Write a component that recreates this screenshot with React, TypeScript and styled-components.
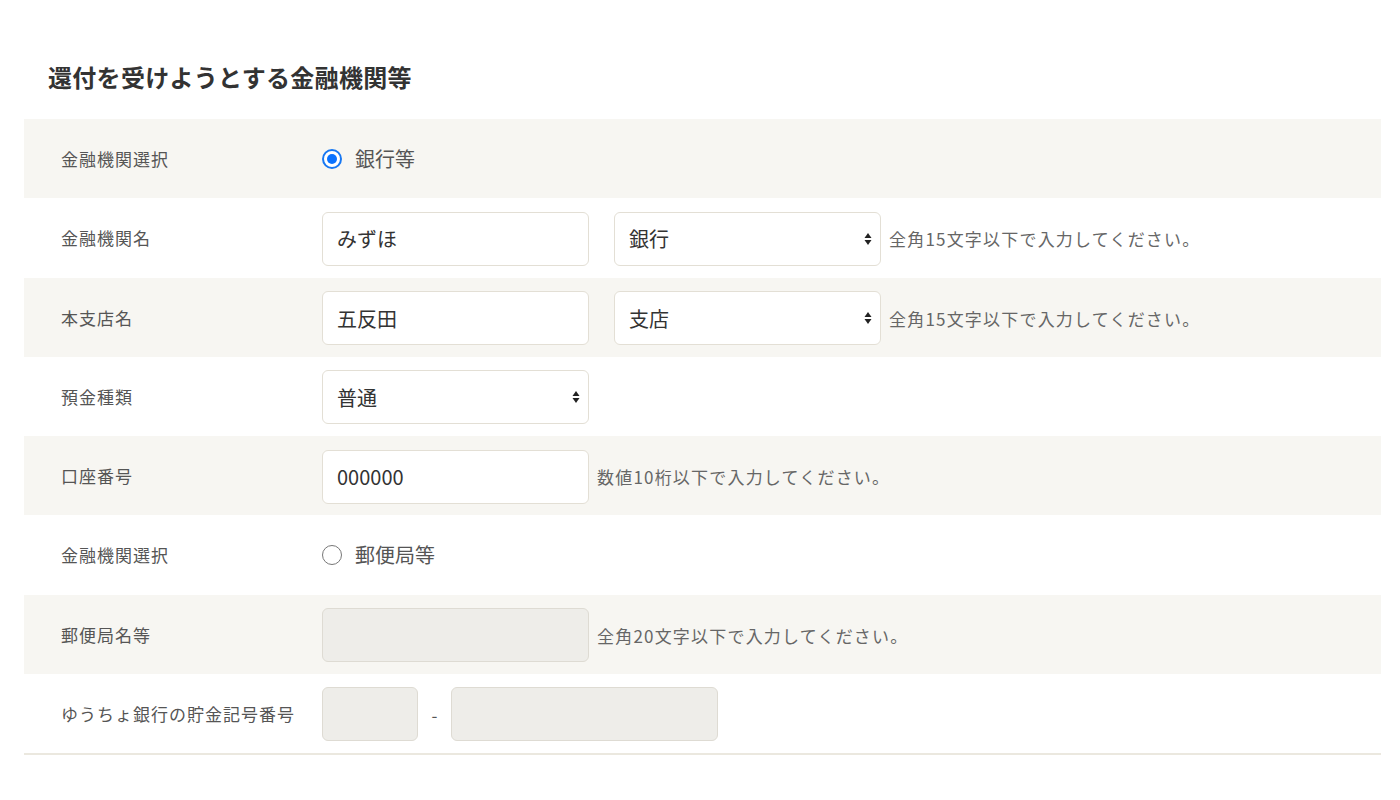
import styled, { createGlobalStyle } from 'styled-components';

const GlobalStyle = createGlobalStyle`
  body {
    margin: 0;
    background: #fff;
    font-family: "Noto Sans CJK JP", "Noto Sans", sans-serif;
    color: #333;
  }
`;

const Page = styled.div`
  padding: 59px 19px 40px 24px;
`;

const Title = styled.h2`
  margin: 0 0 24px 24px;
  font-size: 24px;
  line-height: 36px;
  font-weight: 700;
  color: #333;
  letter-spacing: 0.3px;
`;

const Table = styled.div`
  display: flex;
  flex-direction: column;
  border-bottom: 2px solid #ebe8df;
`;

const Row = styled.div<{ $shaded?: boolean }>`
  display: flex;
  align-items: center;
  height: 79.25px;
  background: ${(p) => (p.$shaded ? '#f7f6f2' : '#fff')};
`;

const Label = styled.div`
  width: 261px;
  padding-left: 37px;
  flex-shrink: 0;
  font-size: 17px;
  color: #555;
  letter-spacing: 1px;
`;

const Field = styled.div`
  display: flex;
  align-items: center;
  padding-top: 2px;
`;

const TextInput = styled.input<{ $width?: number }>`
  box-sizing: border-box;
  width: ${(p) => p.$width ?? 267}px;
  height: 54px;
  padding: 0 14px;
  border: 1px solid #e3dfd5;
  border-radius: 6px;
  background: #fff;
  font-family: "Noto Sans CJK JP", "Noto Sans", sans-serif;
  font-size: 20px;
  color: #333;
  outline: none;

  &:disabled {
    background: #eeede9;
    border-color: #dedbd3;
  }
`;

const SelectWrap = styled.div<{ $gapLeft?: boolean }>`
  position: relative;
  margin-left: ${(p) => (p.$gapLeft ? '25px' : '0')};
`;

const Select = styled.select`
  box-sizing: border-box;
  width: 267px;
  height: 54px;
  padding: 0 14px;
  border: 1px solid #e3dfd5;
  border-radius: 6px;
  background: #fff;
  appearance: none;
  font-family: "Noto Sans CJK JP", "Noto Sans", sans-serif;
  font-size: 20px;
  color: #333;
  outline: none;
`;

const Arrows = styled.svg`
  position: absolute;
  right: 9px;
  top: 50%;
  transform: translateY(-50%);
  pointer-events: none;
`;

const Hint = styled.span`
  margin-left: 8px;
  font-size: 17px;
  color: #666;
  letter-spacing: 1.2px;
`;

const Dash = styled.span`
  width: 33px;
  text-align: center;
  font-size: 17px;
  color: #555;
`;

const RadioLabel = styled.label`
  display: flex;
  align-items: center;
  gap: 13px;
  font-size: 20px;
  color: #555;
`;

const Radio = styled.span<{ $checked?: boolean }>`
  box-sizing: border-box;
  width: 20px;
  height: 20px;
  border-radius: 50%;
  border: ${(p) => (p.$checked ? '2px solid #1777f2' : '1.5px solid #777')};
  display: flex;
  align-items: center;
  justify-content: center;
  background: #fff;

  &::after {
    content: '';
    width: 10px;
    height: 10px;
    border-radius: 50%;
    background: ${(p) => (p.$checked ? '#0a72ff' : 'transparent')};
  }
`;

const SelectBox = ({ value, gapLeft }: { value: string; gapLeft?: boolean }) => (
  <SelectWrap $gapLeft={gapLeft}>
    <Select defaultValue={value}>
      <option>{value}</option>
    </Select>
    <Arrows width="8" height="14" viewBox="0 0 8 14">
      <path d="M4 1 L7.5 6 L0.5 6 Z" fill="#222" />
      <path d="M4 13 L7.5 8 L0.5 8 Z" fill="#222" />
    </Arrows>
  </SelectWrap>
);

const App = () => {
  return (
    <Page>
      <GlobalStyle />
      <Title>還付を受けようとする金融機関等</Title>
      <Table>
        <Row $shaded>
          <Label>金融機関選択</Label>
          <RadioLabel>
            <Radio $checked />
            銀行等
          </RadioLabel>
        </Row>
        <Row>
          <Label>金融機関名</Label>
          <Field>
            <TextInput defaultValue="みずほ" />
            <SelectBox value="銀行" gapLeft />
            <Hint>全角15文字以下で入力してください。</Hint>
          </Field>
        </Row>
        <Row $shaded>
          <Label>本支店名</Label>
          <Field>
            <TextInput defaultValue="五反田" />
            <SelectBox value="支店" gapLeft />
            <Hint>全角15文字以下で入力してください。</Hint>
          </Field>
        </Row>
        <Row>
          <Label>預金種類</Label>
          <Field>
            <SelectBox value="普通" />
          </Field>
        </Row>
        <Row $shaded>
          <Label>口座番号</Label>
          <Field>
            <TextInput defaultValue="000000" />
            <Hint>数値10桁以下で入力してください。</Hint>
          </Field>
        </Row>
        <Row>
          <Label>金融機関選択</Label>
          <RadioLabel>
            <Radio />
            郵便局等
          </RadioLabel>
        </Row>
        <Row $shaded>
          <Label>郵便局名等</Label>
          <Field>
            <TextInput disabled />
            <Hint>全角20文字以下で入力してください。</Hint>
          </Field>
        </Row>
        <Row>
          <Label>ゆうちょ銀行の貯金記号番号</Label>
          <Field>
            <TextInput disabled $width={96} />
            <Dash>-</Dash>
            <TextInput disabled />
          </Field>
        </Row>
      </Table>
    </Page>
  );
};

export default App;
